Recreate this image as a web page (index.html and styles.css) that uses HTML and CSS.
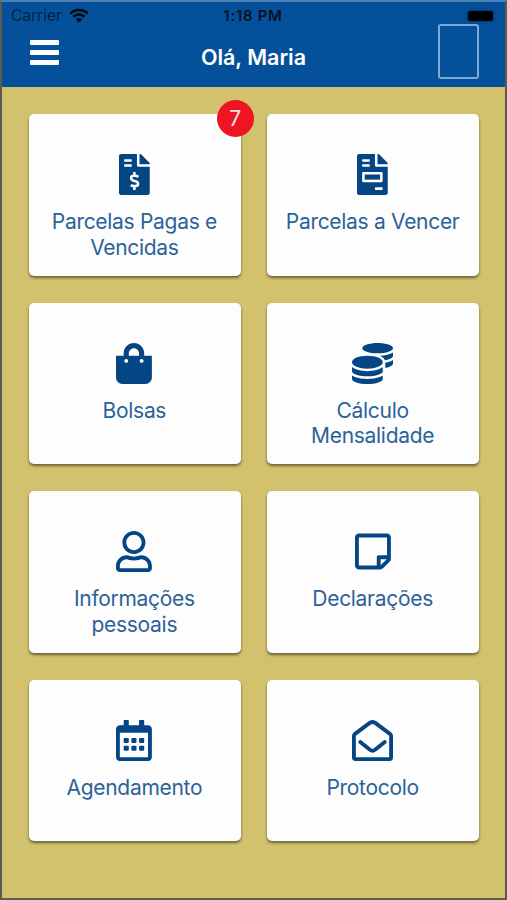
FILE: index.html
```html
<!DOCTYPE html>
<html lang="pt-br">

<head>
    <meta charset="UTF-8">
    <meta name="viewport" content="width=device-width, initial-scale=1.0">
    <title>Início</title>
    <link rel="stylesheet" href="styles.css">
</head>

<body>
    <!-- Cabeçalho -->
    <header class="header">
        <div class="status-bar">
            <div class="carrier">
                <span>Carrier</span>
                <svg class="wifi" viewBox="0 0 20 15">
                    <path d="M1.2 5.6a12.6 12.6 0 0 1 17.6 0M4.3 8.8a8.2 8.2 0 0 1 11.4 0" />
                    <path class="wifi-dot" d="M10 14.6L6.7 11.3a4.7 4.7 0 0 1 6.6 0z" />
                </svg>
            </div>
            <span class="time">1:18 PM</span>
            <div class="battery"></div>
        </div>
        <div class="toolbar">
            <button class="menu-btn" aria-label="Menu">
                <span></span>
                <span></span>
                <span></span>
            </button>
            <h1>Olá, Maria</h1>
            <div class="photo"></div>
        </div>
    </header>

    <!-- Opções -->
    <main class="cards">
        <a class="card">
            <span class="badge">7</span>
            <svg class="icon" viewBox="0 0 384 512">
                <path fill-rule="evenodd" d="M377 105L279.1 7c-4.5-4.5-10.6-7-17-7H256v128h128v-6.1c0-6.3-2.5-12.4-7-16.9zM224 136V0H24C10.7 0 0 10.7 0 24v464c0 13.3 10.7 24 24 24h336c13.3 0 24-10.7 24-24V160H248c-13.2 0-24-10.8-24-24zM72 64h80a8 8 0 0 1 8 8v16a8 8 0 0 1-8 8H72a8 8 0 0 1-8-8V72a8 8 0 0 1 8-8zM72 128h80a8 8 0 0 1 8 8v16a8 8 0 0 1-8 8H72a8 8 0 0 1-8-8v-16a8 8 0 0 1 8-8z" />
                <path class="cut" d="M192 224v40M192 408v40M241 286c-12-10-23-14-35-14h-24c-18 0-31 13-31 29 0 14 9 25 22 29l43 13c13 4 22 15 22 29 0 16-13 28-30 28h-25c-13 0-25-4-36-13" />
            </svg>
            <p>Parcelas Pagas e<br>Vencidas</p>
        </a>
        <a class="card">
            <svg class="icon" viewBox="0 0 384 512">
                <path fill-rule="evenodd" d="M377 105L279.1 7c-4.5-4.5-10.6-7-17-7H256v128h128v-6.1c0-6.3-2.5-12.4-7-16.9zM224 136V0H24C10.7 0 0 10.7 0 24v464c0 13.3 10.7 24 24 24h336c13.3 0 24-10.7 24-24V160H248c-13.2 0-24-10.8-24-24zM72 64h80a8 8 0 0 1 8 8v16a8 8 0 0 1-8 8H72a8 8 0 0 1-8-8V72a8 8 0 0 1 8-8zM72 128h80a8 8 0 0 1 8 8v16a8 8 0 0 1-8 8H72a8 8 0 0 1-8-8v-16a8 8 0 0 1 8-8zM80 224h224a16 16 0 0 1 16 16v96a16 16 0 0 1-16 16H80a16 16 0 0 1-16-16v-96a16 16 0 0 1 16-16zM232 416h80a8 8 0 0 1 8 8v16a8 8 0 0 1-8 8h-80a8 8 0 0 1-8-8v-16a8 8 0 0 1 8-8z" />
                <path d="M96 256h192v64H96z" />
            </svg>
            <p>Parcelas a Vencer</p>
        </a>
        <a class="card">
            <svg class="icon" viewBox="0 0 448 512">
                <path d="M352 160v-32C352 57.42 294.579 0 224 0 153.42 0 96 57.42 96 128v32H0v272c0 44.183 35.817 80 80 80h288c44.183 0 80-35.817 80-80V160h-96zm-192-32c0-35.29 28.71-64 64-64s64 28.71 64 64v32H160v-32zm160 120c-13.255 0-24-10.745-24-24s10.745-24 24-24 24 10.745 24 24-10.745 24-24 24zm-192 0c-13.255 0-24-10.745-24-24s10.745-24 24-24 24 10.745 24 24-10.745 24-24 24z" />
            </svg>
            <p>Bolsas</p>
        </a>
        <a class="card">
            <svg class="icon" viewBox="0 0 512 512">
                <path d="M0 405.3V448c0 35.3 86 64 192 64s192-28.7 192-64v-42.7C342.7 434.4 267.2 448 192 448S41.3 434.4 0 405.3zM320 128c106 0 192-28.7 192-64S426 0 320 0 128 28.7 128 64s86 64 192 64zM0 300.4V352c0 35.3 86 64 192 64s192-28.7 192-64v-51.6c-41.3 34-116.9 51.6-192 51.6S41.3 334.4 0 300.4zm416 11c57.3-11.1 96-31.7 96-55.4v-42.7c-23.2 16.4-57.3 27.6-96 34.5v63.6zM192 160C86 160 0 195.8 0 240s86 80 192 80 192-35.8 192-80-86-80-192-80zm219.3 56.3c60-10.8 100.7-32 100.7-56.3v-42.7c-35.5 25.1-96.5 38.6-160.7 41.8 29.5 14.3 51.2 33.5 60 57.2z" />
            </svg>
            <p>Cálculo<br>Mensalidade</p>
        </a>
        <a class="card">
            <svg class="icon" viewBox="0 0 448 512">
                <path d="M313.6 304c-28.7 0-42.5 16-89.6 16-47.1 0-60.8-16-89.6-16C60.2 304 0 364.2 0 438.4V464c0 26.5 21.5 48 48 48h352c26.5 0 48-21.5 48-48v-25.6c0-74.2-60.2-134.4-134.4-134.4zM400 464H48v-25.6c0-47.6 38.8-86.4 86.4-86.4 14.6 0 38.3 16 89.6 16 51.7 0 74.9-16 89.6-16 47.6 0 86.4 38.8 86.4 86.4V464zM224 288c79.5 0 144-64.5 144-144S303.5 0 224 0 80 64.5 80 144s64.5 144 144 144zm0-240c52.9 0 96 43.1 96 96s-43.1 96-96 96-96-43.1-96-96 43.1-96 96-96z" />
            </svg>
            <p>Informações<br>pessoais</p>
        </a>
        <a class="card">
            <svg class="icon" viewBox="0 0 448 512">
                <path d="M448 348.106V80c0-26.51-21.49-48-48-48H48C21.49 32 0 53.49 0 80v351.988c0 26.51 21.49 48 48 48h268.118a48 48 0 0 0 33.941-14.059l83.882-83.882A48 48 0 0 0 448 348.106zm-128 80v-76.118h76.118L320 428.106zM400 80v223.988H296c-13.255 0-24 10.745-24 24v104H48V80h352z" />
            </svg>
            <p>Declarações</p>
        </a>
        <a class="card">
            <svg class="icon" viewBox="0 0 448 512">
                <path fill-rule="evenodd" d="M448 112v352c0 26.5-21.5 48-48 48H48c-26.5 0-48-21.5-48-48V112c0-26.5 21.5-48 48-48h48V12c0-6.6 5.4-12 12-12h40c6.6 0 12 5.4 12 12v52h128V12c0-6.6 5.4-12 12-12h40c6.6 0 12 5.4 12 12v52h48c26.5 0 48 21.5 48 48zm-48 346V160H48v298c0 3.3 2.7 6 6 6h340c3.3 0 6-2.7 6-6z" />
                <rect x="96" y="224" width="64" height="64" rx="12" />
                <rect x="192" y="224" width="64" height="64" rx="12" />
                <rect x="288" y="224" width="64" height="64" rx="12" />
                <rect x="96" y="320" width="64" height="64" rx="12" />
                <rect x="192" y="320" width="64" height="64" rx="12" />
                <rect x="288" y="320" width="64" height="64" rx="12" />
            </svg>
            <p>Agendamento</p>
        </a>
        <a class="card">
            <svg class="icon" viewBox="0 0 512 512">
                <path class="line" d="M24 464V196c0-8 3-14 10-20L222 36q34-24 68 0L478 176c7 6 10 12 10 20v268a24 24 0 0 1-24 24H48a24 24 0 0 1-24-24z" />
                <path class="line" d="M103 274l121 98q32 22 64 0l121-98" />
            </svg>
            <p>Protocolo</p>
        </a>
    </main>
</body>

</html>
```

FILE: styles.css
```css
* {
    box-sizing: border-box;
}

/* Página */
body {
    margin: 0;
    height: 100vh;
    overflow: hidden;
    font-family: Inter, "Liberation Sans", sans-serif;
    background-color: #d3c26d;
    border: 2px solid #5e5a50;
    border-top-color: #4b80b4;
}

/* Cabeçalho */
.header {
    height: 85px;
    background-color: #04509a;
}

.status-bar {
    display: grid;
    grid-template-columns: 1fr auto 1fr;
    align-items: center;
    height: 22px;
    padding: 4px 10px 0 9px;
    font-size: 15.5px;
    line-height: 19px;
    color: #04213f;
}

.carrier {
    display: flex;
    align-items: center;
    gap: 7px;
}

.wifi {
    width: 20px;
    height: 15px;
    fill: none;
    stroke: #020a14;
    stroke-width: 2.6;
}

.wifi-dot {
    fill: #020a14;
    stroke: none;
}

.time {
    font-weight: 600;
    letter-spacing: 0.7px;
    font-size: 15px;
    color: #031326;
}

.battery {
    justify-self: end;
    width: 25px;
    height: 10px;
    margin-right: 2px;
    border-radius: 2px;
    background-color: #000;
    box-shadow: 0 0 3px #02254a;
}

.toolbar {
    display: grid;
    grid-template-columns: 1fr auto 1fr;
    padding: 0 26px 0 28px;
}

.menu-btn {
    display: flex;
    flex-direction: column;
    gap: 5px;
    width: 29px;
    margin-top: 15.5px;
    padding: 0;
    border: none;
    background: none;
}

.menu-btn span {
    height: 5px;
    border-radius: 1px;
    background-color: #fff;
}

.toolbar h1 {
    margin: 20px 2px 0 0;
    font-size: 21.5px;
    line-height: 27px;
    font-weight: 600;
    color: #fff;
}

.photo {
    justify-self: end;
    width: 41px;
    height: 55px;
    border: 2px solid #7fa9d2;
    border-radius: 3px;
}

/* Cartões */
.cards {
    display: grid;
    grid-template-columns: 1fr 1fr;
    grid-auto-rows: 161.5px;
    gap: 27px 26.5px;
    padding: 27px 26px 0 27px;
}

.card {
    position: relative;
    display: flex;
    flex-direction: column;
    align-items: center;
    padding: 40px 1px 0 0;
    background-color: #fdfdfd;
    border-radius: 5px;
    box-shadow: 0 2px 3px rgba(50, 45, 20, 0.65);
}

.icon {
    height: 41px;
    fill: #044583;
}

.icon .line {
    fill: none;
    stroke: #044583;
    stroke-width: 48;
    stroke-linecap: round;
    stroke-linejoin: round;
}

.icon .cut {
    fill: none;
    stroke: #fdfdfd;
    stroke-width: 32;
}

.card p {
    margin: 14px 0 0;
    font-size: 21px;
    line-height: 25.5px;
    letter-spacing: -0.3px;
    text-align: center;
    color: #2c6298;
}

.badge {
    position: absolute;
    top: -14px;
    right: -13px;
    width: 37px;
    height: 37px;
    border-radius: 50%;
    background-color: #ee1424;
    color: #fbe4e6;
    font-size: 21px;
    line-height: 37px;
    text-align: center;
}
```
